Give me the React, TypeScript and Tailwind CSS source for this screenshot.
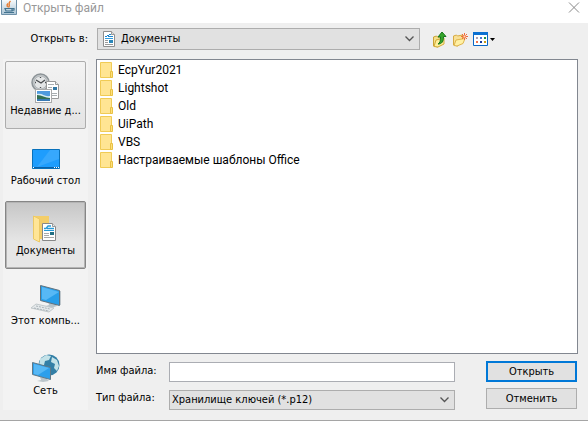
import type { ReactNode } from "react";

function DocumentIcon() {
  return (
    <svg width="12" height="16" viewBox="0 0 12 16" aria-hidden="true">
      <path d="M.5.5h8l3 3v12H.5z" fill="#fff" stroke="#8e8e8e" />
      <path d="M8.500.5v3h3" fill="#ddd" stroke="#999" />
      <path d="M2 5.500h2M6 3.500h2M4 4.500h2M5 5.500h5" stroke="#1c86cf" />
      <path d="M2 7.500h8" stroke="#2c9be0" />
      <path d="M2 9.500h3M2 11.500h3M2 13.500h8" stroke="#9a9a9a" />
      <path d="M6 9h4v3H6z" fill="#2b86b8" />
    </svg>
  );
}

function FolderIcon() {
  return (
    <svg width="14" height="16" viewBox="0 0 14 16" aria-hidden="true">
      <path d="M.5.5h11v15H.5z" fill="#ffe593" stroke="#f0cb55" />
      <path d="M10.500 15.500v-6h2v6z" fill="#ffdf7b" stroke="#e8c144" />
    </svg>
  );
}

function JavaIcon() {
  return (
    <svg width="16" height="15" viewBox="0 0 16 15" aria-hidden="true">
      <defs>
        <linearGradient id="java" x2="0" y2="1">
          <stop stopColor="#fafcfd" />
          <stop offset="1" stopColor="#a9c3d4" />
        </linearGradient>
      </defs>
      <path d="M.5-.5h15v15H.5z" fill="url(#java)" stroke="#6d90a8" />
      <path d="M9.500 1C6 4 10 4 7.500 7.500M7 3.500C5 5 7 6 6 7" fill="none" stroke="#e8782a" strokeWidth="1.400" />
      <path d="M4 8.500h7v2.500H5zM11 8.500h2v1.500l-2 .5M3 12.500h10" fill="none" stroke="#42738f" strokeWidth="1.200" />
    </svg>
  );
}

function UpIcon() {
  return (
    <svg width="15" height="17" viewBox="0 0 15 17" aria-hidden="true">
      <path d="M1.500 6l3-1 1 1 5-1v7l-5 4-4-1z" fill="#f6e08a" stroke="#c9a136" />
      <path d="M2 15.500L4 9l8-2v6l-6 3z" fill="#ffef9c" stroke="#d2aa38" />
      <path d="M6 13c2-1 2.500-3 2.500-7H6l4-5 4 4.500h-2.500c0 5-1.500 7.500-5.500 7.500z" fill="#35a52b" stroke="#17751b" />
    </svg>
  );
}

function NewFolderIcon() {
  return (
    <svg width="16" height="15" viewBox="0 0 16 15" aria-hidden="true">
      <path d="M1.500 4l3-1 1 1 5-1v7l-5 4-4-1z" fill="#f8e095" stroke="#d6aa43" />
      <path d="M2 13.500L4 8l9-1.500-2 5L5 14z" fill="#fff0a4" stroke="#dfb54d" />
      <path d="M12.500 1v7M9 4.500h7M10 2l5 5M15 2l-5 5" stroke="#f0693c" />
      <path d="M11.500 3.500h2v2h-2z" fill="#ffd9b5" />
    </svg>
  );
}

function ViewIcon() {
  return (
    <svg width="22" height="14" viewBox="0 0 22 14" aria-hidden="true">
      <path d="M.5.5h14v13H.5z" fill="#fff" stroke="#0866c6" />
      <path d="M0 0h15v3H0z" fill="#0b70d1" />
      <path d="M3 5h2v2H3z" fill="#aaa0b2" />
      <path d="M7 5h2v2H7z" fill="#4a76d5" />
      <path d="M11 5h2v2h-2z" fill="#1b9147" />
      <path d="M3 9h2v2H3z" fill="#ee734d" />
      <path d="M7 9h2v2H7z" fill="#173a9c" />
      <path d="M11 9h2v2h-2z" fill="#c89b17" />
      <path d="M17 6h5l-2.500 3z" fill="#000" />
    </svg>
  );
}

function RecentIcon() {
  return (
    <svg width="30" height="30" viewBox="0 0 30 30" aria-hidden="true">
      <circle cx="9.500" cy="9.500" r="8.500" fill="#c3c7c9" stroke="#8c9397" strokeWidth="1.500" />
      <circle cx="9.500" cy="9.500" r="6.500" fill="#e3e5e6" stroke="#b2b7ba" />
      <path d="M5 7l5 3 4-3M9.500 4v1M9.500 14v1M4 9.500h1M14 9.500h1" fill="none" stroke="#4a4d50" strokeWidth="1.300" />
      <path d="M15.500 8.500h9l3 3v14h-12z" fill="#fff" stroke="#999" />
      <path d="M24.500 8.500v3h3" fill="#eee" stroke="#999" />
      <path d="M17 11.500h6M17 14.500h4M21 20.500h5M21 22.500h5" stroke="#a7adb0" />
      <path d="M22 14h4v3h-4z" fill="#3478a4" />
      <path d="M4 16h17v14H4z" fill="#aaa" />
      <path d="M5 17h15v12H5z" fill="#fff" />
      <path d="M6 18h13v10H6z" fill="#4f9ade" />
      <path d="M6 21c6-1 7 3 13 2v2H6z" fill="#d6ecf4" />
      <path d="M6 22c5 0 8 3 13 3v1H6z" fill="#336f52" />
      <path d="M6 26h13v2H6z" fill="#397ab5" />
    </svg>
  );
}

function DesktopIcon() {
  return (
    <svg width="28" height="20" viewBox="0 0 28 20" aria-hidden="true">
      <path d="M.5.5h27v19H.5z" fill="#1e9dfd" stroke="#0871bb" />
      <path d="M18 1h9v9L5 18z" fill="#37a8fd" />
      <path d="M1 18h26v1H1z" fill="#0b61a8" />
      <path d="M1 18h1v1H1zM22 18h1v1h-1zM24 18h1v1h-1zM26 18h1v1h-1z" fill="#fff" />
    </svg>
  );
}

function DocumentsFolderIcon() {
  return (
    <svg width="25" height="28" viewBox="0 0 25 28" aria-hidden="true">
      <path d="M0 1h16v23H0z" fill="#f4ce69" />
      <path d="M.5 1l6 3v23l-6-3z" fill="#ffe596" stroke="#ecc966" />
      <path d="M9.500 8.500h10l3 3v14h-13z" fill="#fff" stroke="#888" />
      <path d="M19.500 8.500v3h3" fill="#e8e8e8" stroke="#999" />
      <path d="M11 13.500h2l2-2.500h3M14 13.500h7" fill="none" stroke="#299bd8" strokeWidth="1.300" />
      <path d="M11 15.500h10" stroke="#279ad8" />
      <path d="M11 18.500h5M11 20.500h5M11 22.500h10" stroke="#aaa" />
      <path d="M17 17h4v3h-4z" fill="#226f83" />
    </svg>
  );
}

function ComputerIcon() {
  return (
    <svg width="32" height="28" viewBox="0 0 32 28" aria-hidden="true">
      <path d="M18 17l8 2 1 2-6 2-5-2 3-1z" fill="#b8c4ca" />
      <path d="M10.500.5l19 5v15l-19-5z" fill="#289ee9" stroke="#60717c" />
      <path d="M12 2l17 5-13 8-4-1z" fill="#57b8f5" />
      <path d="M30.500 6v14" stroke="#bfc7cc" />
      <path d="M6 19l18 4-5 4L1 23z" fill="#e6eaec" stroke="#c1c8cb" />
      <path d="M6 21l14 3M4 23l15 3" stroke="#a9b3b8" strokeDasharray="2 1" />
    </svg>
  );
}

function NetworkIcon() {
  return (
    <svg width="28" height="29" viewBox="0 0 28 29" aria-hidden="true">
      <circle cx="17" cy="11" r="10.500" fill="#337fa6" />
      <path d="M8 5l6-4 5 1-2 4-4 1-1 4-5 1M20 3l5 3 2 6-2 5-3-3 1-4-4-2z" fill="#c3e2e8" />
      <path d="M8 23l6 1 3 3-6 1-6-1 4-1z" fill="#bac5cb" />
      <path d="M.5 8.500l18 5v12l-18-5z" fill="#2d9feb" stroke="#617987" />
      <path d="M2 10l15 4-11 7-4-1z" fill="#57b8f5" />
    </svg>
  );
}

function Chevron() {
  return (
    <svg className="pointer-events-none absolute top-1/2 right-1.5 -translate-y-1/2" width="9" height="6" viewBox="0 0 9 6" aria-hidden="true">
      <path d="M.5.5l4 4 4-4" fill="none" stroke="#555" strokeWidth="1.300" />
    </svg>
  );
}

function Place({ label, icon, look }: { label: string; icon: ReactNode; look?: "raised" | "pressed" }) {
  const style =
    look === "raised"
      ? "border-[#adadad] bg-linear-to-b from-[#f3f3f3] to-[#e4e4e4]"
      : look === "pressed"
        ? "border-[#868686] bg-linear-to-b from-[#c6c6c6] to-[#e6e6e6] to-60% inset-ring inset-ring-[#b4b4b4]"
        : "border-transparent";
  return (
    <button className={`flex h-[68px] w-full flex-col items-center justify-end rounded-xs border pb-[9px] ${style}`}>
      {icon}
      <span className="leading-4 whitespace-nowrap">{label}</span>
    </button>
  );
}

const folders = ["EcpYur2021", "Lightshot", "Old", "UiPath", "VBS", "Настраиваемые шаблоны Office"];

export default function App() {
  return (
    <div className="flex min-h-screen flex-col border-b border-[#a5a5a5] bg-[#efefef] font-['DejaVu_Sans_Condensed','Open_Sans',sans-serif] text-[11px] text-black">
      <header className="flex h-[23px] items-start bg-white pr-2">
        <div className="pl-px">
          <JavaIcon />
        </div>
        <h1 className="pl-1.5 font-[Roboto,sans-serif] text-[12px] leading-4 text-[#999]">Открыть файл</h1>
        <button aria-label="Закрыть" className="mt-0.5 ml-auto">
          <svg width="12" height="11" viewBox="0 0 12 11" aria-hidden="true">
            <path d="M1 .5l10 10M11 .5l-10 10" stroke="#888" />
          </svg>
        </button>
      </header>

      <div className="flex h-9 items-start pt-[5px]">
        <label htmlFor="folder" className="w-[97px] shrink-0 pr-[9px] text-right leading-[22px]">
          Открыть в:
        </label>
        <div className="relative min-w-0 flex-1">
          <div className="pointer-events-none absolute top-[3px] left-1.5">
            <DocumentIcon />
          </div>
          <select id="folder" className="block h-[22px] w-full appearance-none border border-[#adadad] bg-[#e1e1e1] pl-[23px]">
            <option>Документы</option>
          </select>
          <Chevron />
        </div>
        <div className="flex h-[22px] w-[168px] shrink-0 items-center gap-[5px] pl-3">
          <button aria-label="На один уровень вверх"><UpIcon /></button>
          <button aria-label="Создать папку"><NewFolderIcon /></button>
          <button aria-label="Меню вида"><ViewIcon /></button>
        </div>
      </div>

      <div className="flex flex-1 gap-2 pr-2.5 pb-2.5 pl-[3px]">
        <nav className="flex w-[85px] shrink-0 flex-col gap-0.5 bg-[#f3f3f3] px-0.5 pt-0.5">
          <Place label="Недавние д..." icon={<RecentIcon />} look="raised" />
          <Place label="Рабочий стол" icon={<div className="mb-1"><DesktopIcon /></div>} />
          <Place label="Документы" icon={<DocumentsFolderIcon />} look="pressed" />
          <Place label="Этот компь..." icon={<ComputerIcon />} />
          <Place label="Сеть" icon={<NetworkIcon />} />
        </nav>

        <main className="flex min-w-0 flex-1 flex-col">
          <ul className="flex-1 border border-[#828790] bg-white px-[3px] py-px font-[Roboto,sans-serif] text-[12px]">
            {folders.map((name) => (
              <li key={name} className="flex h-[18px] items-center gap-1">
                <FolderIcon />
                {name}
              </li>
            ))}
          </ul>

          <form className="flex gap-[31px] pt-[7px] pr-px" onSubmit={(event) => event.preventDefault()}>
            <div className="grid min-w-0 flex-1 grid-cols-[73px_1fr] gap-y-2 pt-px">
              <label htmlFor="name" className="leading-[18px]">Имя файла:</label>
              <input id="name" type="text" className="h-5 w-full min-w-0 border border-[#abadb3] bg-white px-1" />
              <label htmlFor="type" className="leading-4">Тип файла:</label>
              <div className="relative">
                <select id="type" className="block h-5 w-full appearance-none border border-[#adadad] bg-[#e1e1e1] pl-0.5">
                  <option>Хранилище ключей (*.p12)</option>
                </select>
                <Chevron />
              </div>
            </div>
            <div className="flex w-[91px] shrink-0 flex-col gap-1.5">
              <button type="submit" className="h-[21px] border-2 border-[#0078d7] bg-[#e1e1e1] leading-4">Открыть</button>
              <button type="button" className="h-[21px] border border-[#adadad] bg-[#e1e1e1] leading-4">Отменить</button>
            </div>
          </form>
        </main>
      </div>
    </div>
  );
}
